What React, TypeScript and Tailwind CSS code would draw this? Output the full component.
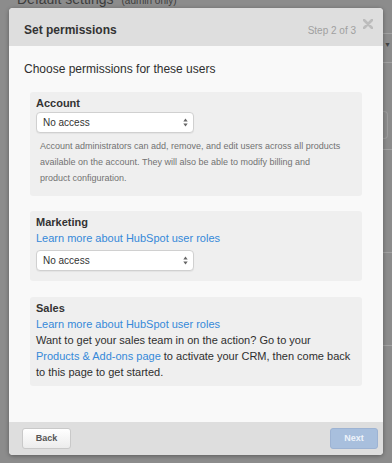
import React from "react";

// Set permissions modal, step 2 of 3

const font = { fontFamily: '"Liberation Sans", Arial, sans-serif' };

const SelectBox = () => (
  <div className="flex h-[21px] w-[158px] items-center justify-between rounded-[4px] border border-[#d0d0d0] bg-white pl-[6px] pr-[5px] text-[10px] text-[#333] shadow-[0_1px_1px_rgba(0,0,0,0.05)]">
    <span>No access</span>
    <svg width="5" height="9" viewBox="0 0 5 9">
      <path d="M2.5 0.5 L4.7 3.5 L0.3 3.5 Z" fill="#666" />
      <path d="M2.5 8.5 L4.7 5.5 L0.3 5.5 Z" fill="#666" />
    </svg>
  </div>
);

const Panel = ({ title, children, className }: { title: string; children: React.ReactNode; className?: string }) => (
  <div className={"mx-[6px] rounded-[3px] bg-[#efefef] pl-[6px] pr-[10px] pt-[3px] " + (className ?? "")}>
    <div className="text-[11px] font-bold leading-[16px] text-[#333]">{title}</div>
    {children}
  </div>
);

const Link = ({ children }: { children: React.ReactNode }) => (
  <span className="text-[#3589d9]">{children}</span>
);

export default function App() {
  return (
    <div className="relative h-[463px] w-[392px] overflow-hidden bg-[#8c8c8c]" style={font}>
      {/* page behind the overlay */}
      <div className="absolute left-[17px] top-[-8px] flex items-baseline gap-[8px] leading-[14px] text-[#3d3d3d]">
        <span className="text-[14px]">Default settings</span>
        <span className="text-[10px]">(admin only)</span>
      </div>
      <div className="absolute right-0 top-[33px] h-px w-[20px] bg-[#a2a2a2]" />
      <div className="absolute right-[1px] top-[41px] text-[7px] leading-none text-[#444]">▼</div>
      <div className="absolute right-0 top-[62px] h-px w-[20px] bg-[#a2a2a2]" />
      <div className="absolute right-[4px] top-[111px] h-[28px] w-[20px] rounded-r-[4px] border border-l-0 border-[#9d9d9d]" />
      <div className="absolute right-0 top-[149px] h-px w-[20px] bg-[#a2a2a2]" />
      <div className="absolute right-0 top-[252px] h-px w-[20px] bg-[#a2a2a2]" />
      <div className="absolute right-0 top-[345px] h-px w-[20px] bg-[#a2a2a2]" />

      {/* modal */}
      <div className="absolute left-[9px] top-[8px] flex h-[447px] w-[374px] flex-col overflow-hidden rounded-[4px] bg-[#f9f9f9] shadow-[0_1px_4px_rgba(0,0,0,0.35)]">
        <div className="relative flex h-[38px] items-end justify-between bg-[#dedede] pb-[6px] pl-[15px] pr-[27px]">
          <span className="text-[12px] font-bold leading-[20px] text-[#333]">Set permissions</span>
          <span className="text-[10px] leading-[18px] text-[#a0a0a0]">Step 2 of 3</span>
          <svg className="absolute right-[10px] top-[11px]" width="10" height="10" viewBox="0 0 10 10">
            <path d="M1 1 L9 9 M9 1 L1 9" stroke="#bcbcbc" strokeWidth="2.6" strokeLinecap="round" />
          </svg>
        </div>

        <div className="flex-1 px-[15px] pt-[13px]">
          <div className="text-[12px] leading-[20px] text-[#2e2e2e]">Choose permissions for these users</div>

          <Panel title="Account" className="mt-[13px] pb-[10px]">
            <div className="mt-[1px]">
              <SelectBox />
            </div>
            <p className="mt-[5px] pl-[4px] text-[9px] leading-[16px] text-[#727272]">
              Account administrators can add, remove, and edit users across all products available on the account. They will also be able to modify billing and
              <br />
              product configuration.
            </p>
          </Panel>

          <Panel title="Marketing" className="mt-[15px] pb-[10px]">
            <div className="text-[11px] leading-[16px]">
              <Link>Learn more about HubSpot user roles</Link>
            </div>
            <div className="mt-[4px]">
              <SelectBox />
            </div>
          </Panel>

          <Panel title="Sales" className="mt-[16px] pb-[6px]">
            <div className="text-[11px] leading-[16px] text-[#2e2e2e]">
              <div>
                <Link>Learn more about HubSpot user roles</Link>
              </div>
              <p>
                Want to get your sales team in on the action? Go to your <Link>Products &amp; Add-ons page</Link> to activate your CRM, then come back to this page to get started.
              </p>
            </div>
          </Panel>
        </div>

        <div className="flex h-[33px] items-start justify-between bg-[#dedede] pl-[13px] pr-[5px] pt-[6px]">
          <button className="h-[21px] w-[49px] rounded-[3px] border border-[#c9c9c9] bg-gradient-to-b from-white to-[#ececec] text-[9px] font-bold text-[#555]">
            Back
          </button>
          <button className="h-[21px] w-[48px] rounded-[3px] border border-[#9db3d3] bg-[#a8bfdd] text-[9px] font-bold text-[#eef3fa]">
            Next
          </button>
        </div>
      </div>
    </div>
  );
}
